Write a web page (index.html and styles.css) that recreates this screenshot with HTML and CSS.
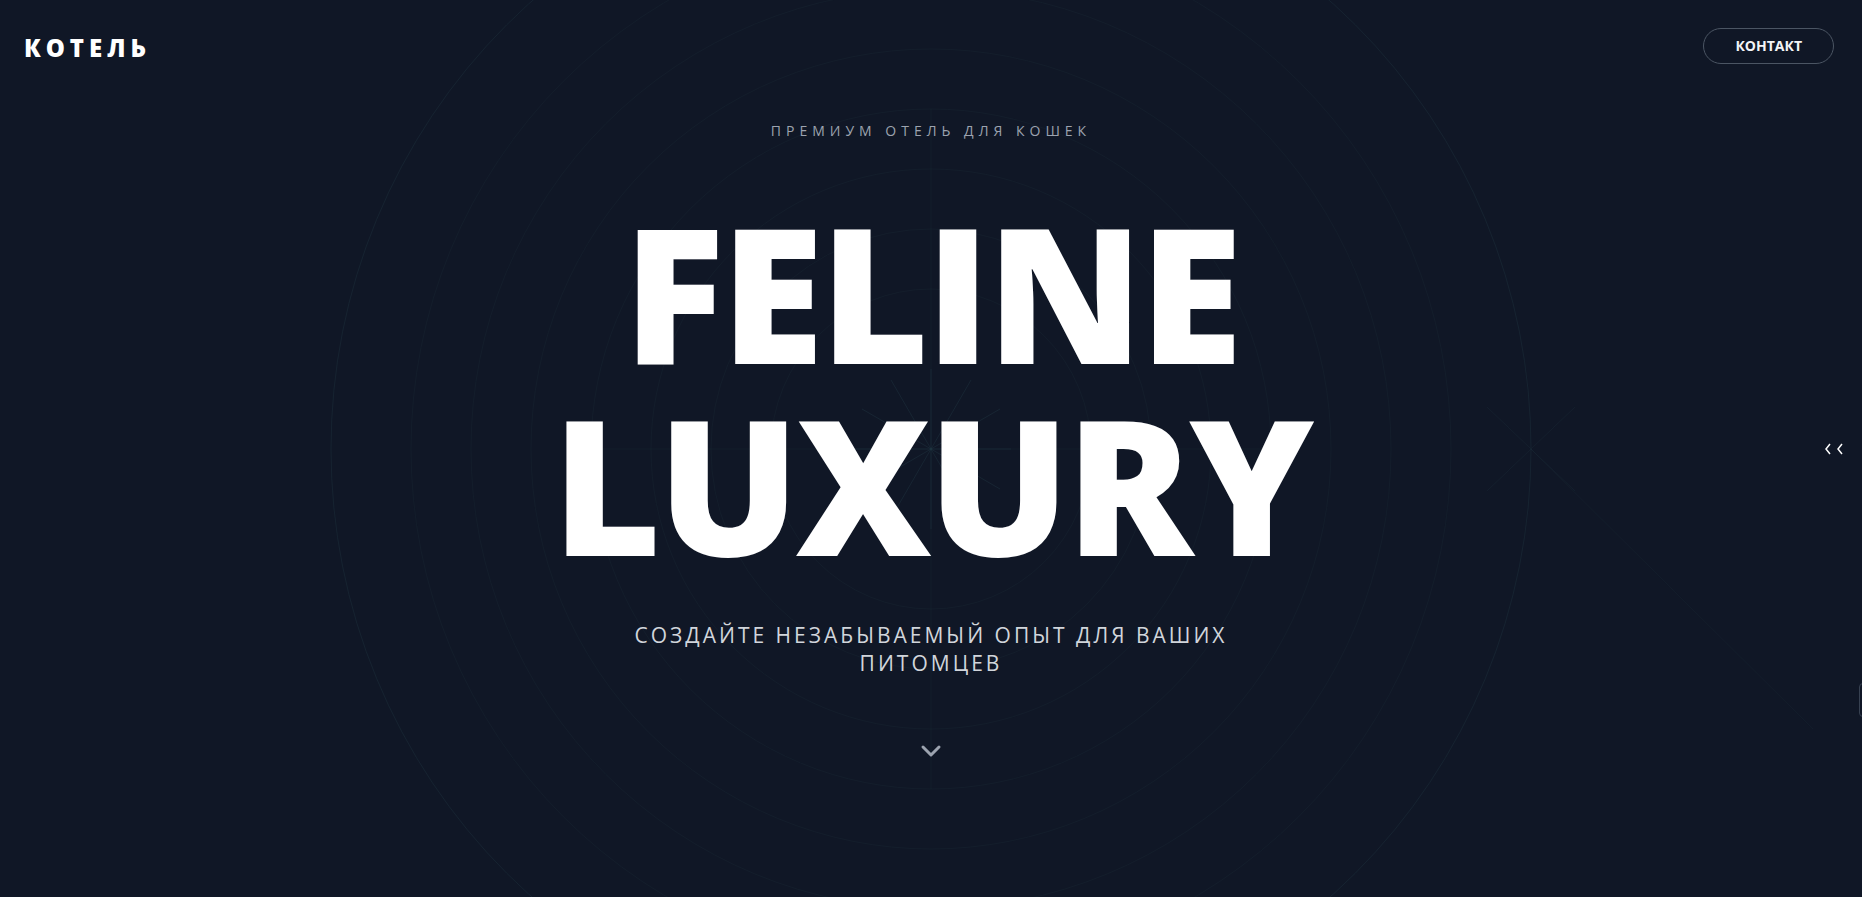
FILE: index.html
```html
<!DOCTYPE html>
<html lang="ru">
<head>
  <meta charset="UTF-8">
  <meta name="viewport" content="width=device-width, initial-scale=1.0">
  <title>КОТЕЛЬ - премиум отель для кошек</title>
  <link rel="stylesheet" href="styles.css">
</head>
<body>
  <!-- Фоновый узор -->
  <svg class="pattern" viewBox="-600 -450 1200 900" fill="none" stroke="#26404a" aria-hidden="true">
    <circle r="600" stroke-opacity="0.3"/>
    <g stroke-opacity="0.15">
      <circle r="520"/>
      <circle r="460"/>
      <circle r="400"/>
      <circle r="340"/>
      <circle r="280"/>
      <circle r="220"/>
      <circle r="160"/>
      <path d="M0-340V340M-340 0H340"/>
      <path d="M600 0L882 280"/>
    </g>
    <path stroke-opacity="0.35" d="M0-80V80M-80 0H80M-40-69L40 69M40-69L-40 69M-69-40L69 40M69-40L-69 40"/>
    <path stroke-opacity="0.2" d="M556-42L644 42M644-42L556 42"/>
  </svg>

  <header class="header">
    <a href="#" class="logo">КОТЕЛЬ</a>
    <button class="contact-btn" type="button">КОНТАКТ</button>
  </header>

  <main class="hero">
    <p class="tagline">ПРЕМИУМ ОТЕЛЬ ДЛЯ КОШЕК</p>
    <h1 class="title">FELINE<br>LUXURY</h1>
    <p class="subtitle">СОЗДАЙТЕ НЕЗАБЫВАЕМЫЙ ОПЫТ ДЛЯ ВАШИХ ПИТОМЦЕВ</p>
    <a href="#next" class="scroll-down" aria-label="Вниз">
      <svg width="24" height="24" viewBox="0 0 24 24" fill="none" stroke="currentColor" stroke-width="3" stroke-linecap="round" stroke-linejoin="round"><path d="M4 8l8 8 8-8"/></svg>
    </a>
  </main>

  <button class="side-toggle" type="button" aria-label="Открыть панель">
    <svg width="20" height="12" viewBox="0 0 20 12" fill="none" stroke="currentColor" stroke-width="1.5"><path d="M6 1L2 6l4 5M18 1l-4 5 4 5"/></svg>
  </button>
  <div class="side-panel"></div>
</body>
</html>
```
FILE: styles.css
```css
* {
  margin: 0;
  padding: 0;
  box-sizing: border-box;
}

body {
  position: relative;
  display: flex;
  flex-direction: column;
  min-height: 100vh;
  overflow: hidden;
  background-color: #101726;
  color: #fff;
  font-family: 'Segoe UI', 'Open Sans', 'Noto Sans', sans-serif;
}

/* Фон */
.pattern {
  position: absolute;
  top: 50%;
  left: 50%;
  width: 1200px;
  height: 900px;
  overflow: visible;
  transform: translate(-50%, -50%);
  z-index: -1;
}

/* Шапка */
.header {
  display: flex;
  justify-content: space-between;
  align-items: flex-start;
  padding: 28px 28px 0 24px;
}
.logo {
  color: #fff;
  font-size: 24px;
  font-weight: 800;
  line-height: 40px;
  letter-spacing: 5px;
  text-decoration: none;
}
.contact-btn {
  height: 36px;
  padding: 0 31px 2px;
  border: 1px solid #4b5563;
  border-radius: 18px;
  background: transparent;
  color: #f3f4f6;
  font-family: inherit;
  font-size: 14px;
  font-weight: 700;
  cursor: pointer;
}

/* Главный экран */
.hero {
  display: flex;
  flex-direction: column;
  align-items: center;
  padding-top: 53px;
  text-align: center;
}
.tagline {
  color: #9ca3af;
  font-size: 14px;
  line-height: 20px;
  letter-spacing: 5px;
}
.title {
  margin-top: 54px;
  font-size: 188px;
  font-weight: 800;
  line-height: 192px;
  letter-spacing: -4px;
}
.subtitle {
  max-width: 672px;
  margin-top: 42px;
  color: #d1d5db;
  font-size: 21px;
  line-height: 28px;
  letter-spacing: 3px;
}
.scroll-down {
  display: flex;
  margin-top: 62px;
  color: #9ca3af;
}

/* Боковая панель */
.side-toggle {
  position: absolute;
  top: 50%;
  right: 18px;
  display: flex;
  border: none;
  background: none;
  color: #fff;
  transform: translateY(-50%);
  cursor: pointer;
}
.side-panel {
  position: absolute;
  right: -30px;
  bottom: 180px;
  width: 33px;
  height: 34px;
  border: 1px solid #374151;
  border-radius: 4px;
}
```
